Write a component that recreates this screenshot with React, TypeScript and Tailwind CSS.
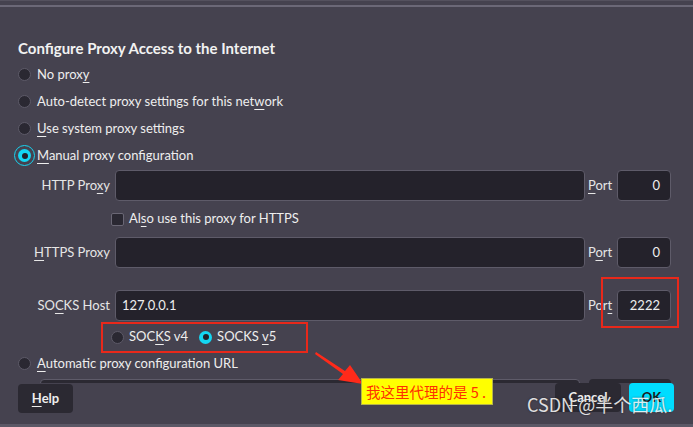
import React from "react";

const U = ({ children }: { children: React.ReactNode }) => (
  <span className="underline decoration-1 underline-offset-[3px]">{children}</span>
);

const Radio = ({ checked = false, focus = false }: { checked?: boolean; focus?: boolean }) => (
  <span className="relative flex h-[13px] w-[13px] shrink-0 items-center justify-center">
    {focus && (
      <span className="absolute left-[-4px] top-[-4px] h-[21px] w-[21px] rounded-full border-[1.5px] border-[#18d4f0]" />
    )}
    {checked ? (
      <span className="flex h-[13px] w-[13px] items-center justify-center rounded-full bg-[#14d6f2]">
        <span className="h-[6px] w-[6px] rounded-full bg-[#23212a]" />
      </span>
    ) : (
      <span className="h-[13px] w-[13px] rounded-full border border-[#5d5a68] bg-[#2a2832]" />
    )}
  </span>
);

const Input = ({ value = "", className = "" }: { value?: string; className?: string }) => (
  <div
    className={
      "flex h-[31px] items-center rounded-[4px] border border-[#5e5b69] bg-[#24222b] text-[13px] text-[#eeeeee] " +
      className
    }
  >
    {value}
  </div>
);

const ProxyRow = ({
  label,
  value,
  portLabel,
  port,
}: {
  label: React.ReactNode;
  value?: string;
  portLabel: React.ReactNode;
  port: string;
}) => (
  <div className="flex h-[31px] items-center">
    <div className="w-[93px] pr-[1px] text-right text-[13px] text-[#e6e6e6]">{label}</div>
    <Input value={value} className="ml-[4px] flex-1 pl-[6px]" />
    <div className="ml-[3px] w-[26px] text-[13px] text-[#e6e6e6]">{portLabel}</div>
    <Input value={port} className="ml-[3px] w-[54px] justify-end pr-[10px]" />
  </div>
);

export default function App() {
  return (
    <div className="relative flex h-[427px] w-[693px] flex-col overflow-hidden bg-[#45424f] font-['Lato',sans-serif] text-[#eeeeee]">
      <div className="h-px bg-[#54515e]" />
      <div className="h-[4px]" />
      <div className="h-[2px] bg-[#6b6877]" />

      {/* scrolling content */}
      <div className="h-[376px] overflow-hidden pl-[18px] pr-[22px]">
        <div className="mt-[32px] h-[18px] text-[15px] font-bold leading-[18px] text-[#f2f2f2]">
          Configure Proxy Access to the Internet
        </div>
        <div className="mt-[4px]">
          <div className="flex h-[27px] items-center gap-[6px] text-[13px]">
            <Radio />
            <span>
              No prox<U>y</U>
            </span>
          </div>
          <div className="flex h-[27px] items-center gap-[6px] text-[13px]">
            <Radio />
            <span>
              Auto-detect proxy settings for this net<U>w</U>ork
            </span>
          </div>
          <div className="flex h-[27px] items-center gap-[6px] text-[13px]">
            <Radio />
            <span>
              <U>U</U>se system proxy settings
            </span>
          </div>
          <div className="flex h-[27px] items-center gap-[6px] text-[13px]">
            <Radio checked focus />
            <span>
              <U>M</U>anual proxy configuration
            </span>
          </div>
        </div>

        <div className="mt-[1px]">
          <ProxyRow
            label={
              <>
                HTTP Pro<U>x</U>y
              </>
            }
            portLabel={
              <>
                <U>P</U>ort
              </>
            }
            port="0"
          />
          <div className="flex h-[36px] items-center pl-[93px] text-[13px]">
            <span className="h-[13px] w-[13px] rounded-[2px] border border-[#6a6775] bg-[#2a2832]" />
            <span className="ml-[5px]">
              Al<U>s</U>o use this proxy for HTTPS
            </span>
          </div>
          <ProxyRow
            label={
              <>
                <U>H</U>TTPS Proxy
              </>
            }
            portLabel={
              <>
                P<U>o</U>rt
              </>
            }
            port="0"
          />
          <div className="mt-[22px]">
            <ProxyRow
              label={
                <>
                  SO<U>C</U>KS Host
                </>
              }
              value="127.0.0.1"
              portLabel={
                <>
                  Por<U>t</U>
                </>
              }
              port="2222"
            />
          </div>
          <div className="flex h-[32px] items-center pl-[93px] text-[13px]">
            <Radio />
            <span className="ml-[5px]">
              SOC<U>K</U>S v4
            </span>
            <span className="ml-[11px]">
              <Radio checked />
            </span>
            <span className="ml-[5px]">
              SOCKS <U>v</U>5
            </span>
          </div>
        </div>

        <div className="flex h-[21px] items-center gap-[6px] text-[13px]">
          <Radio />
          <span>
            <U>A</U>utomatic proxy configuration URL
          </span>
        </div>
        <div className="mt-[5px] flex">
          <div className="ml-[22px] h-[30px] w-[540px] rounded-[4px] border border-[#5e5b69] bg-[#2b2932]" />
          <div className="ml-[9px] h-[30px] flex-1 rounded-[4px] bg-[#2b2932]" />
        </div>
      </div>

      {/* button bar */}
      <div className="flex h-[41px] items-start pl-[18px] pr-[19px]">
        <div className="mt-[1px] flex h-[29px] w-[55px] items-center justify-center rounded-[4px] bg-[#2b2932] text-[13px] font-bold">
          <span>
            <U>H</U>elp
          </span>
        </div>
        <div className="flex-1" />
        <div className="flex h-[29px] w-[66px] items-center justify-center rounded-[4px] bg-[#2b2932] text-[13px] font-bold">
          <span>
            <U>C</U>ancel
          </span>
        </div>
        <div className="ml-[8px] flex h-[29px] w-[45px] items-center justify-center rounded-[4px] bg-[#00ddff] text-[13px] font-bold text-[#1d1b22]">
          OK
        </div>
      </div>
      <div className="h-[3px] bg-[#5b5866]" />

      {/* annotations */}
      <div className="absolute left-[601px] top-[277px] h-[51px] w-[78px] border-2 border-[#e8281a]" />
      <div className="absolute left-[101px] top-[322px] h-[31px] w-[207px] border-2 border-[#e8281a]" />
      <svg className="absolute left-0 top-0" width="693" height="427" viewBox="0 0 693 427">
        <polygon
          points="316,352 345,371 350,365 363,384 338,380 343,374 315,354"
          fill="#ff2a1a"
        />
      </svg>
      <div className="absolute left-[361px] top-[378px] flex h-[27px] w-[132px] items-center border border-[#b5b54a] bg-[#ffff00] pl-[4px] font-['Noto_Sans_CJK_SC',sans-serif] text-[14.5px] text-[#ff3000]">
        我这里代理的是 5 .
      </div>
      <div className="absolute left-[527px] top-[393px] font-['Noto_Sans_CJK_SC',sans-serif] text-[18px] leading-[22px] text-white/85 [text-shadow:0_0_2px_rgba(0,0,0,0.5)]">
        CSDN @半个西瓜.
      </div>
    </div>
  );
}
